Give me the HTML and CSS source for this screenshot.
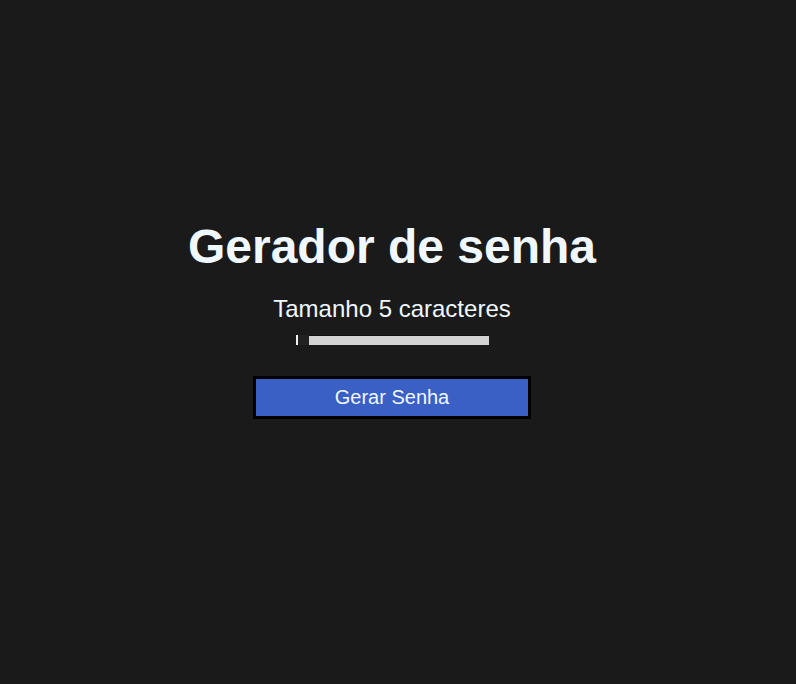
FILE: index.html
```html
<!DOCTYPE html>
<html lang="pt-BR">
<head>
<meta charset="utf-8">
<title>Gerador de senha</title>
<link rel="stylesheet" href="styles.css">
</head>
<body>
<main class="app">
  <h1 class="title">Gerador de senha</h1>
  <p class="size-label">Tamanho <span>5</span> caracteres</p>
  <input class="slider" type="range" min="5" max="20" value="5">
  <button class="generate">Gerar Senha</button>
</main>
</body>
</html>
```
FILE: styles.css
```css
html, body {
  margin: 0;
  padding: 0;
  background: #1a1a1a;
  height: 100%;
}
body {
  font-family: "Liberation Sans", Arial, sans-serif;
}
.app {
  display: flex;
  flex-direction: column;
  align-items: center;
  padding: 219px 12px 0 0;
  box-sizing: border-box;
  min-height: 100vh;
}
.title {
  margin: 0;
  font-size: 48px;
  line-height: 56px;
  font-weight: 700;
  color: #f0f8ff;
}
.size-label {
  margin: 20px 0 0;
  font-size: 24px;
  line-height: 28px;
  color: #f0f8ff;
}
.slider {
  -webkit-appearance: none;
  appearance: none;
  margin: 12px 0 0 0;
  padding: 0;
  width: 193px;
  height: 10px;
  background: #d3d3d3;
  border: none;
  border-top: 1px solid #111;
  box-sizing: border-box;
  outline: none;
}
.slider::-webkit-slider-thumb {
  -webkit-appearance: none;
  appearance: none;
  width: 13px;
  height: 10px;
  margin-top: -1px;
  background: #222222;
  border-left: 2px solid #f0f0f0;
  box-sizing: border-box;
}
.generate {
  margin-top: 31px;
  width: 278px;
  height: 43px;
  background: #3a5fc5;
  border: 3px solid #000;
  color: #f0f8ff;
  font-family: "Liberation Sans", Arial, sans-serif;
  font-size: 20px;
  padding: 0;
  box-sizing: border-box;
}
```
